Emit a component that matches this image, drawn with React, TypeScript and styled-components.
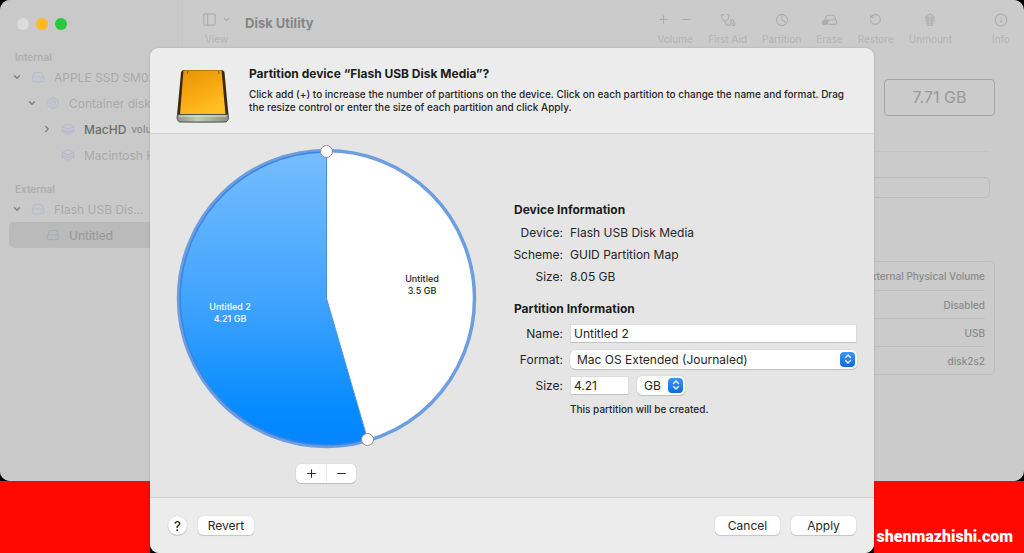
import React from "react";
import styled, { createGlobalStyle } from "styled-components";
import { Plus, Minus, RotateCcw, Info, ChevronDown, ChevronRight, PanelLeft, ChevronsUpDown } from "lucide-react";

const GlobalStyle = createGlobalStyle`
  *, *::before, *::after { box-sizing: border-box; }
  body {
    margin: 0;
    background: #ff0800;
    font-family: Inter, "Liberation Sans", sans-serif;
    font-size: 12px;
    color: #262626;
  }
  button, input, select { font: inherit; color: inherit; }
  h1, h2, p, ul, dl, dd { margin: 0; padding: 0; }
`;

const Desktop = styled.div`
  position: relative;
  min-height: 100vh;
  display: flex;
  flex-direction: column;
  overflow: hidden;
`;

const WindowArea = styled.div`
  flex: 1;
  display: flex;
  background: #000;
`;

const Window = styled.div`
  flex: 1;
  display: flex;
  border-radius: 10px;
  overflow: hidden;
  background: #cbcbcb;
`;

const Wallpaper = styled.footer`
  height: 72px;
  display: flex;
  align-items: flex-end;
  justify-content: flex-end;
  padding: 0 11px 5px;
  background: #ff0800;
`;

const Watermark = styled.span`
  font-family: Roboto, "Liberation Sans", sans-serif;
  font-weight: 900;
  font-size: 16px;
  line-height: 22px;
  color: #fff;
`;

const Sidebar = styled.aside`
  width: 183px;
  flex: none;
  padding: 18px 0 0 9px;
  background: #c9c9c9;
  border-right: 1px solid #c6c6c6;
  overflow: hidden;
`;

const Lights = styled.div`
  display: flex;
  gap: 7px;
  padding-left: 8px;
  margin-bottom: 20px;
`;

const Light = styled.span<{ $color: string }>`
  width: 12px;
  height: 12px;
  border-radius: 50%;
  background: ${(p) => p.$color};
`;

const GroupTitle = styled.h2`
  padding-left: 6px;
  font-size: 10px;
  line-height: 14px;
  font-weight: 600;
  color: #adadad;
`;

const Tree = styled.ul`
  list-style: none;
  margin-bottom: 14px;
`;

const TreeRow = styled.li<{ $level: number; $strong?: boolean; $selected?: boolean }>`
  display: flex;
  align-items: center;
  gap: 9px;
  height: 26px;
  padding-left: ${(p) => 3 + p.$level * 15}px;
  border-radius: 5px;
  white-space: nowrap;
  color: ${(p) => (p.$strong ? "#6c6c6c" : p.$selected ? "#979797" : "#a9a9a9")};
  font-weight: ${(p) => (p.$strong ? 500 : 400)};
  background: ${(p) => (p.$selected ? "#bababa" : "transparent")};
  svg { flex: none; }
  small { margin-left: -4px; font-size: 10px; color: #8a8a8a; }
`;

const Twist = styled.span`
  width: 10px;
  height: 10px;
  display: flex;
  color: #828282;
`;

const Main = styled.main`
  flex: 1;
  min-width: 0;
  display: flex;
  flex-direction: column;
`;

const Toolbar = styled.header`
  display: flex;
  align-items: flex-start;
  padding: 12px 14px 0 19px;
  height: 48px;
`;

const Tools = styled.div`
  display: flex;
  gap: 15px;
  margin-left: auto;
`;

const Tool = styled.button<{ $last?: boolean }>`
  display: flex;
  flex-direction: column;
  align-items: center;
  gap: 5px;
  padding: 0;
  margin-left: ${(p) => (p.$last ? 25 : 0)}px;
  border: 0;
  background: none;
  color: #b3b3b3;
  font-size: 10px;
  line-height: 14px;
`;

const Glyphs = styled.span<{ $gap?: number }>`
  display: flex;
  align-items: center;
  gap: ${(p) => p.$gap ?? 0}px;
  height: 15px;
  color: #adadad;
`;

const AppTitle = styled.h1`
  margin-left: 14px;
  font-size: 13px;
  line-height: 22px;
  font-weight: 700;
  color: #858585;
`;

const Details = styled.section`
  display: flex;
  flex-direction: column;
  padding: 31px 29px 0 20px;
`;

const Capacity = styled.output`
  align-self: flex-end;
  width: 111px;
  padding: 8px 0;
  border: 1px solid #a3a3a3;
  border-radius: 4px;
  text-align: center;
  font-size: 16px;
  line-height: 19px;
  color: #999;
`;

const Rule = styled.div`
  height: 1px;
  margin: 35px 5px 25px 0;
  background: #c3c3c3;
`;

const UsageBar = styled.div`
  height: 21px;
  margin: 0 5px 63px 0;
  border: 1px solid #bcbcbc;
  border-radius: 5px;
`;

const Facts = styled.table`
  width: 100%;
  padding: 0 9px;
  border: 1px solid #bebebe;
  border-radius: 4px;
  border-spacing: 0;
  td {
    height: 28px;
    padding: 0;
    text-align: right;
    font-size: 10px;
    font-weight: 500;
    color: #8a8a8a;
  }
  tr + tr td { border-top: 1px solid #bebebe; }
`;

const SheetFrame = styled.div`
  position: absolute;
  top: 48px;
  bottom: 0;
  left: 150px;
  right: 150px;
  display: flex;
  border-radius: 9px 9px 0 0;
  background: linear-gradient(to top, #000 9px, transparent 9px);
  box-shadow: 0 0 3px rgba(0, 0, 0, 0.15);
`;

const Sheet = styled.form`
  flex: 1;
  display: flex;
  flex-direction: column;
  border-radius: 9px;
  overflow: hidden;
  background: #e5e5e5;
`;

const SheetHeader = styled.header`
  display: flex;
  gap: 18px;
  height: 86px;
  padding: 18px 18px 0 25px;
  background: #ececec;
  border-bottom: 1px solid #d3d3d3;
  svg { flex: none; }
`;

const SheetTitle = styled.h2`
  font-size: 12px;
  line-height: 16px;
  font-weight: 700;
  color: #1c1c1c;
`;

const SheetText = styled.p`
  margin-top: 6px;
  font-size: 10px;
  line-height: 13px;
  font-weight: 500;
`;

const SheetBody = styled.div`
  flex: 1;
  display: flex;
  gap: 38px;
  padding: 15px 17px 0 26px;
`;

const ChartColumn = styled.div`
  display: flex;
  flex-direction: column;
  align-items: center;
  gap: 15px;
  svg { display: block; overflow: visible; }
`;

const Segments = styled.div`
  display: flex;
  height: 19px;
  border-radius: 5px;
  background: #fff;
  box-shadow: 0 0 1px rgba(0, 0, 0, 0.25), 0 1px 1px rgba(0, 0, 0, 0.15);
`;

const Segment = styled.button`
  width: 30px;
  padding: 0;
  display: flex;
  align-items: center;
  justify-content: center;
  border: 0;
  background: none;
  & + & { border-left: 1px solid #ececec; }
`;

const InfoColumn = styled.div`
  flex: 1;
  min-width: 0;
  padding-top: 50px;
`;

const InfoTitle = styled.h2<{ $spaced?: boolean }>`
  margin-top: ${(p) => (p.$spaced ? 11 : 0)}px;
  font-size: 12px;
  line-height: 22px;
  font-weight: 700;
  color: #1c1c1c;
`;

const Line = styled.div<{ $field?: boolean }>`
  display: grid;
  grid-template-columns: 49px 1fr;
  column-gap: 7px;
  align-items: center;
  height: ${(p) => (p.$field ? 26 : 22)}px;
  > :first-child { justify-self: end; }
`;

const Control = styled.div`
  display: flex;
  gap: 8px;
`;

const TextInput = styled.input<{ $short?: boolean }>`
  width: ${(p) => (p.$short ? "59px" : "100%")};
  height: 19px;
  padding: 0 3px;
  border: 1px solid #dcdcdc;
  border-bottom-color: #c2c2c2;
  background: #fff;
  outline: none;
`;

const Picker = styled.div<{ $short?: boolean }>`
  position: relative;
  width: ${(p) => (p.$short ? "48px" : "100%")};
  select {
    display: block;
    width: 100%;
    height: 19px;
    padding: 0 7px;
    border: 0;
    border-radius: 5px;
    appearance: none;
    background: #fff;
    box-shadow: 0 0 1px rgba(0, 0, 0, 0.25), 0 1px 1px rgba(0, 0, 0, 0.15);
  }
`;

const PickerBadge = styled.span`
  position: absolute;
  top: 2px;
  right: 2px;
  display: flex;
  align-items: center;
  justify-content: center;
  width: 15px;
  height: 15px;
  border-radius: 4px;
  background: linear-gradient(#3f95f7, #0f69dc);
  color: #fff;
  pointer-events: none;
`;

const Note = styled.p`
  padding-left: 56px;
  font-size: 10px;
  line-height: 22px;
  font-weight: 500;
`;

const SheetFooter = styled.footer`
  display: flex;
  align-items: center;
  gap: 11px;
  height: 56px;
  padding: 0 18px;
  background: #ececec;
  border-top: 1px solid #d3d3d3;
`;

const PushButton = styled.button<{ $wide?: boolean; $end?: boolean }>`
  width: ${(p) => (p.$wide ? 65 : 56)}px;
  height: 19px;
  padding: 0;
  margin-left: ${(p) => (p.$end ? "auto" : 0)};
  border: 0;
  border-radius: 5px;
  background: #fff;
  box-shadow: 0 0 1px rgba(0, 0, 0, 0.25), 0 1px 1px rgba(0, 0, 0, 0.15);
`;

const HelpButton = styled(PushButton)`
  width: 19px;
  border-radius: 50%;
  font-size: 13px;
  font-weight: 500;
`;

const DriveIcon = ({ tint = "#b5bdd0" }: { tint?: string }) => (
  <svg width="14" height="14" viewBox="0 0 14 14" fill="none" stroke={tint} strokeWidth="1.1">
    <path d="M1.5 7.5 L3.2 3.4 Q3.6 2.5 4.6 2.5 H9.4 Q10.4 2.5 10.8 3.4 L12.5 7.5" />
    <rect x="1.2" y="7" width="11.6" height="4.6" rx="1.6" />
    <path d="M9 9.3 H10.8" />
  </svg>
);

const VolumeIcon = () => (
  <svg width="14" height="14" viewBox="0 0 14 14" fill="none" stroke="#b9b7d0" strokeWidth="1.1" strokeLinejoin="round">
    <path d="M7 1.8 L12.6 4.6 L7 7.4 L1.4 4.6 Z" />
    <path d="M1.4 5 V9.6 L7 12.2 L12.6 9.6 V5" />
    <path d="M1.8 8 L7 10 L12.2 8" />
  </svg>
);

const ContainerIcon = () => (
  <svg width="14" height="14" viewBox="0 0 14 14" fill="none" stroke="#b7bdce" strokeWidth="1.1">
    <path d="M7 1.4 L12 4.2 V9.8 L7 12.6 L2 9.8 V4.2 Z" />
    <path d="M5 5.4 L7 4.4 L9 5.4 V8.4 L7 9.6 L5 8.4 Z" />
  </svg>
);

const FirstAidIcon = () => (
  <svg width="16" height="14" viewBox="0 0 16 14" fill="none" stroke="currentColor" strokeWidth="1.1" strokeLinecap="round" strokeLinejoin="round">
    <path d="M3.6 1.6 H2.2 Q1.2 1.8 1.4 3 Q2 6.400 5 8.400 Q8.600 6.800 9.200 3 Q9.400 1.800 8.200 1.600 H7" />
    <path d="M5 8.400 Q5.400 12.400 8.600 12.400 Q11.400 12.400 10.800 9 Q10.600 6.400 12.400 6.600 Q14 7.200 13.800 9.400" />
    <circle cx="13.600" cy="11" r="1.400" />
  </svg>
);

const PartitionIcon = () => (
  <svg width="14" height="14" viewBox="0 0 14 14" fill="none" stroke="currentColor" strokeWidth="1.1">
    <circle cx="7" cy="7" r="5.6" />
    <path d="M7 1.4 V7 L10.6 9.2" />
  </svg>
);

const EraseIcon = () => (
  <svg width="17" height="14" viewBox="0 0 17 14" fill="none" stroke="currentColor" strokeWidth="1.1" strokeLinejoin="round">
    <path d="M4 6.800 L5.4 3.3 Q5.8 2.2 7 2.2 H12 Q13.1 2.2 13.5 3.3 L15 7" />
    <path d="M7 7 H14.2 Q15.8 7 15.8 9 Q15.8 11.4 14.2 11.4 H7.5" />
    <path d="M1.4 8.800 Q2 7 4 7 H7.600 L6 11.400 H2.600 Q1 11.200 1.400 8.800 Z" fill="currentColor" />
  </svg>
);

const UnmountIcon = () => (
  <svg width="14" height="14" viewBox="0 0 14 14" fill="none" stroke="currentColor" strokeWidth="1" strokeLinejoin="round">
    <path d="M7 1 L11.5 4.2 H2.5 Z" />
    <path d="M2 6 H12 M2 8 H12 M3 10.2 H11 M4.4 12.2 H9.6 M5 4 V12 M9 4 V12" />
  </svg>
);

const ExternalDisk = () => (
  <svg width="56" height="58" viewBox="0 0 56 58">
    <defs>
      <linearGradient id="diskTop" x1="0" y1="0" x2="0.5" y2="1">
        <stop offset="0" stopColor="#e59208" />
        <stop offset="0.55" stopColor="#f8a90f" />
        <stop offset="1" stopColor="#ffbf22" />
      </linearGradient>
      <linearGradient id="diskFront" x1="0" y1="0" x2="1" y2="0">
        <stop offset="0" stopColor="#8a9582" />
        <stop offset="0.4" stopColor="#c3cbb9" />
        <stop offset="1" stopColor="#89937f" />
      </linearGradient>
    </defs>
    <path d="M3 55 Q28 59 52 55 V50 H3 Z" fill="#bdbdbd" />
    <path d="M9 4 H46 Q49 4 49.500 6.500 L53.500 49 H2 L6 6.500 Q6.500 4 9 4 Z" fill="#3c2a0c" />
    <path d="M8.500 4.500 H46.500 L50.500 48.500 H5 Z" fill="url(#diskTop)" />
    <path d="M10.500 4.500 H45.500" stroke="#b87403" strokeWidth="1" />
    <path d="M13 5 L12.500 8 M43.500 5 L44 8" stroke="#8d5b06" strokeWidth="1" />
    <path d="M2.500 48.500 H53 Q54.500 54 51 56 H4.500 Q1 54 2.500 48.500 Z" fill="url(#diskFront)" stroke="#4d5049" strokeWidth="1" />
    <path d="M4 50 H51.500" stroke="#e3e8db" strokeWidth="1" />
  </svg>
);

const PartitionChart = () => (
  <svg width="300" height="300" viewBox="0 0 300 300" role="img" aria-label="Partition sizes" fontSize="9" fontWeight="500" textAnchor="middle">
    <defs>
      <linearGradient id="slice" x1="0" y1="0" x2="0" y2="1">
        <stop offset="0" stopColor="#76bdfd" />
        <stop offset="0.5" stopColor="#42a4fd" />
        <stop offset="0.88" stopColor="#058bff" />
        <stop offset="1" stopColor="#0584ff" />
      </linearGradient>
    </defs>
    <circle cx="150.500" cy="149.500" r="147" fill="#fff" />
    <path d="M150.500 149.500 V2.500 A147 147 0 1 0 191.500 290.700 Z" fill="url(#slice)" />
    <path d="M150.500 3 V149.500 L191.500 290" fill="none" stroke="#4b92dc" strokeWidth="1" />
    <circle cx="150.500" cy="149.500" r="148" fill="none" stroke="#6c9ee0" strokeWidth="3.500" />
    <path d="M150.500 3 A146.500 146.500 0 1 0 191.500 290.200" fill="none" stroke="#3c85e2" strokeWidth="1.500" />
    <text x="54" y="161" fill="#fff">Untitled 2</text>
    <text x="54" y="173" fill="#fff">4.21 GB</text>
    <text x="246" y="133" fill="#1c1c1c">Untitled</text>
    <text x="246" y="145" fill="#1c1c1c">3.5 GB</text>
    <g fill="#fff" stroke="#8d8d8d" strokeWidth="1">
      <circle cx="150.500" cy="2.500" r="6" />
      <circle cx="191.500" cy="290.500" r="6" />
    </g>
  </svg>
);

const Down = () => <Twist><ChevronDown size={10} strokeWidth={3.5} /></Twist>;

const tools = [
  { label: "First Aid", icon: <FirstAidIcon /> },
  { label: "Partition", icon: <PartitionIcon /> },
  { label: "Erase", icon: <EraseIcon /> },
  { label: "Restore", icon: <RotateCcw size={13} /> },
  { label: "Unmount", icon: <UnmountIcon /> },
];

const facts = ["USB External Physical Volume", "Disabled", "USB", "disk2s2"];

const deviceInfo = [
  ["Device:", "Flash USB Disk Media"],
  ["Scheme:", "GUID Partition Map"],
  ["Size:", "8.05 GB"],
];

export default function App() {
  return (
    <>
      <GlobalStyle />
      <Desktop>
        <WindowArea>
          <Window>
            <Sidebar>
              <Lights>
                <Light $color="#dcdcdc" />
                <Light $color="#fdb827" />
                <Light $color="#27c93f" />
              </Lights>
              <GroupTitle>Internal</GroupTitle>
              <Tree>
                <TreeRow $level={0}><Down /><DriveIcon />APPLE SSD SM0256</TreeRow>
                <TreeRow $level={1}><Down /><ContainerIcon />Container disk1</TreeRow>
                <TreeRow $level={2} $strong>
                  <Twist><ChevronRight size={10} strokeWidth={3.5} /></Twist>
                  <VolumeIcon />MacHD<small>volumes</small>
                </TreeRow>
                <TreeRow $level={2}><Twist /><VolumeIcon />Macintosh HD</TreeRow>
              </Tree>
              <GroupTitle>External</GroupTitle>
              <Tree>
                <TreeRow $level={0}><Down /><DriveIcon />Flash USB Dis...</TreeRow>
                <TreeRow $level={1} $selected><Twist /><DriveIcon tint="#a9abba" />Untitled</TreeRow>
              </Tree>
            </Sidebar>
            <Main>
              <Toolbar>
                <Tool type="button">
                  <Glyphs $gap={5}><PanelLeft size={15} strokeWidth={1.8} /><ChevronDown size={9} strokeWidth={3} /></Glyphs>
                  View
                </Tool>
                <AppTitle>Disk Utility</AppTitle>
                <Tools>
                  <Tool type="button">
                    <Glyphs $gap={10}><Plus size={13} /><Minus size={13} /></Glyphs>
                    Volume
                  </Tool>
                  {tools.map((t) => (
                    <Tool type="button" key={t.label}><Glyphs>{t.icon}</Glyphs>{t.label}</Tool>
                  ))}
                  <Tool type="button" $last><Glyphs><Info size={14} /></Glyphs>Info</Tool>
                </Tools>
              </Toolbar>
              <Details>
                <Capacity>7.71 GB</Capacity>
                <Rule />
                <UsageBar />
                <Facts>
                  <tbody>
                    {facts.map((f) => <tr key={f}><td>{f}</td></tr>)}
                  </tbody>
                </Facts>
              </Details>
            </Main>
          </Window>
        </WindowArea>
        <Wallpaper><Watermark>shenmazhishi.com</Watermark></Wallpaper>

        <SheetFrame role="dialog" aria-labelledby="sheet-title">
          <Sheet onSubmit={(e) => e.preventDefault()}>
            <SheetHeader>
              <ExternalDisk />
              <div>
                <SheetTitle id="sheet-title">Partition device “Flash USB Disk Media”?</SheetTitle>
                <SheetText>
                  Click add (+) to increase the number of partitions on the device. Click on each partition to change the name and format. Drag the resize control or enter the size of each partition and click Apply.
                </SheetText>
              </div>
            </SheetHeader>
            <SheetBody>
              <ChartColumn>
                <PartitionChart />
                <Segments>
                  <Segment type="button" aria-label="Add partition"><Plus size={13} /></Segment>
                  <Segment type="button" aria-label="Remove partition"><Minus size={13} /></Segment>
                </Segments>
              </ChartColumn>
              <InfoColumn>
                <InfoTitle>Device Information</InfoTitle>
                {deviceInfo.map(([k, v]) => (
                  <Line key={k}><span>{k}</span><span>{v}</span></Line>
                ))}
                <InfoTitle $spaced>Partition Information</InfoTitle>
                <Line $field>
                  <label htmlFor="name">Name:</label>
                  <TextInput id="name" defaultValue="Untitled 2" />
                </Line>
                <Line $field>
                  <label htmlFor="format">Format:</label>
                  <Picker>
                    <select id="format"><option>Mac OS Extended (Journaled)</option></select>
                    <PickerBadge><ChevronsUpDown size={12} strokeWidth={2.5} /></PickerBadge>
                  </Picker>
                </Line>
                <Line $field>
                  <label htmlFor="size">Size:</label>
                  <Control>
                    <TextInput id="size" $short defaultValue="4.21" />
                    <Picker $short>
                      <select aria-label="Unit"><option>GB</option></select>
                      <PickerBadge><ChevronsUpDown size={12} strokeWidth={2.5} /></PickerBadge>
                    </Picker>
                  </Control>
                </Line>
                <Note>This partition will be created.</Note>
              </InfoColumn>
            </SheetBody>
            <SheetFooter>
              <HelpButton type="button" aria-label="Help">?</HelpButton>
              <PushButton type="button">Revert</PushButton>
              <PushButton type="button" $wide $end>Cancel</PushButton>
              <PushButton type="submit" $wide>Apply</PushButton>
            </SheetFooter>
          </Sheet>
        </SheetFrame>
      </Desktop>
    </>
  );
}
